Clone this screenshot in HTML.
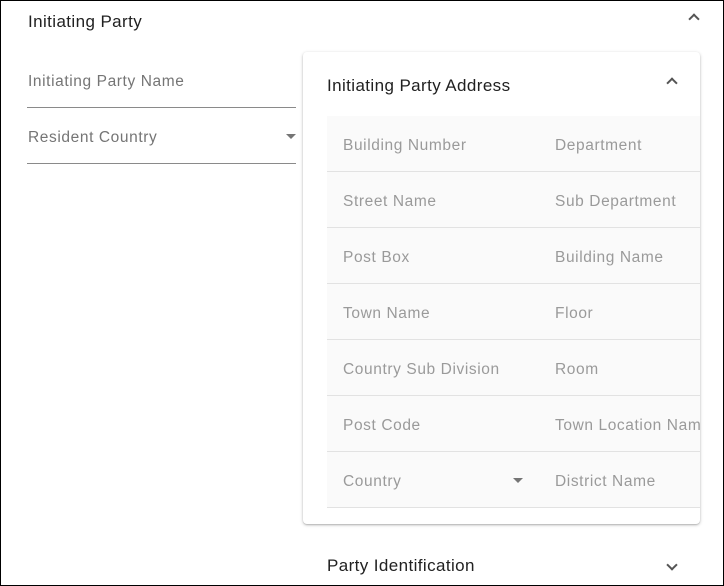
<!DOCTYPE html>
<html><head><style>
*{box-sizing:border-box;margin:0;padding:0}
body{width:724px;height:586px;overflow:hidden;background:#fff;font-family:"Liberation Sans",sans-serif;position:relative}
.frame{position:absolute;left:0;top:0;width:724px;height:586px;border:1px solid #000}
.t{position:absolute;white-space:nowrap}
.h{font-size:17px;color:#212121;letter-spacing:0.4px}
.lbl{font-size:15.5px;color:#757575;letter-spacing:0.6px}
.ln{position:absolute;height:1px;background:#8a8a8a}
.card{position:absolute;left:303px;top:52px;width:397px;height:472px;background:#fff;border-radius:4px;box-shadow:0 1px 3px rgba(0,0,0,.25),0 1px 1px rgba(0,0,0,.12);overflow:hidden}
.cell{position:absolute;height:56px;background:#fafafa;border-bottom:1px solid #e2e2e2;font-size:15.5px;color:#9a9a9a;letter-spacing:0.6px;padding:21px 0 0 16px;white-space:nowrap;overflow:hidden}
.chev{position:absolute;width:8px;height:8px;border-left:2px solid #555;border-top:2px solid #555}
.up{transform:rotate(45deg)}
.down{transform:rotate(225deg)}
.tri{position:absolute;width:0;height:0;border-left:5px solid transparent;border-right:5px solid transparent;border-top:5px solid #757575}
</style></head><body>
<div class="frame"></div>
<div class="t h" style="left:28px;top:12px">Initiating Party</div>
<div class="chev up" style="left:690px;top:15px"></div>
<div class="t lbl" style="left:28px;top:73px">Initiating Party Name</div>
<div class="ln" style="left:27px;top:107px;width:269px"></div>
<div class="t lbl" style="left:28px;top:129px">Resident Country</div>
<div class="tri" style="left:286px;top:134px"></div>
<div class="ln" style="left:27px;top:163px;width:269px"></div>

<div class="card">
<div class="t h" style="left:24px;top:24px">Initiating Party Address</div>
<div class="chev up" style="left:365px;top:27px"></div>
<div class="cell" style="left:24px;top:64px;width:212px">Building Number</div>
<div class="cell" style="left:236px;top:64px;width:170px">Department</div>
<div class="cell" style="left:24px;top:120px;width:212px">Street Name</div>
<div class="cell" style="left:236px;top:120px;width:170px">Sub Department</div>
<div class="cell" style="left:24px;top:176px;width:212px">Post Box</div>
<div class="cell" style="left:236px;top:176px;width:170px">Building Name</div>
<div class="cell" style="left:24px;top:232px;width:212px">Town Name</div>
<div class="cell" style="left:236px;top:232px;width:170px">Floor</div>
<div class="cell" style="left:24px;top:288px;width:212px">Country Sub Division</div>
<div class="cell" style="left:236px;top:288px;width:170px">Room</div>
<div class="cell" style="left:24px;top:344px;width:212px">Post Code</div>
<div class="cell" style="left:236px;top:344px;width:170px">Town Location Name</div>
<div class="cell" style="left:24px;top:400px;width:212px">Country</div>
<div class="cell" style="left:236px;top:400px;width:170px">District Name</div>
<div class="tri" style="left:210px;top:426px"></div>
</div>

<div class="t h" style="left:327px;top:556px">Party Identification</div>
<div class="chev down" style="left:668px;top:561px"></div>
</body></html>
